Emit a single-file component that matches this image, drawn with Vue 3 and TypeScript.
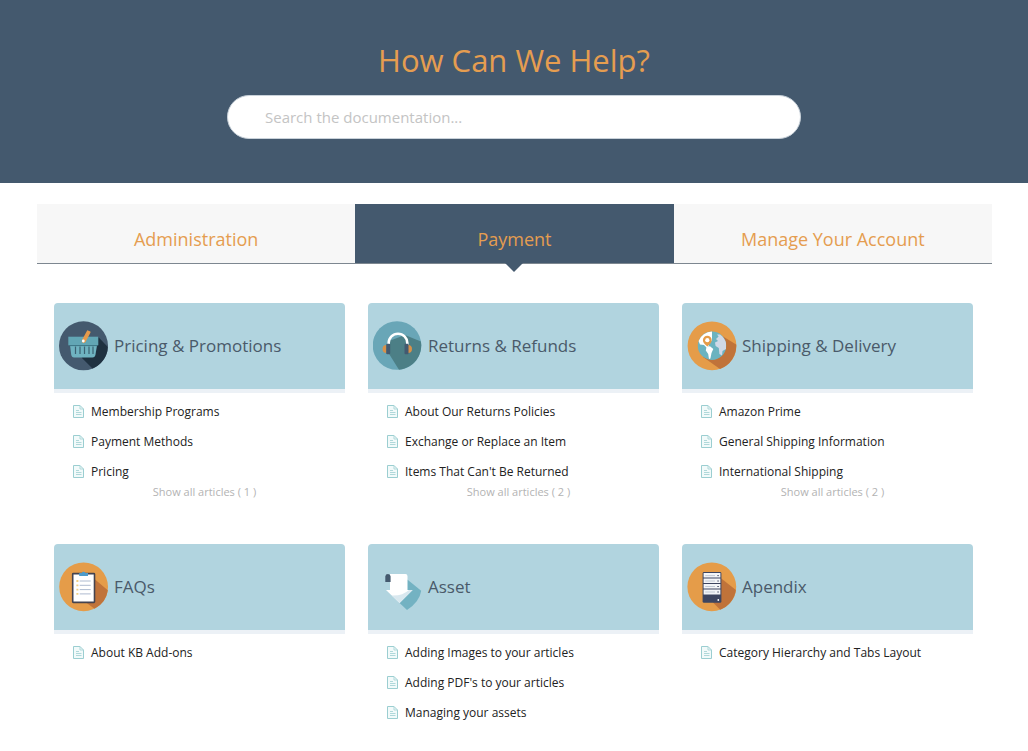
<script setup lang="ts">
import { computed, ref } from 'vue'

interface Category {
  icon: string
  title: string
  articles: string[]
  more?: number
}

const tabs: string[] = ['Administration', 'Payment', 'Manage Your Account']
const active = ref<string>('Payment')
const query = ref<string>('')

const categories: Category[] = [
  { icon: 'basket', title: 'Pricing & Promotions', articles: ['Membership Programs', 'Payment Methods', 'Pricing'], more: 1 },
  { icon: 'headphones', title: 'Returns & Refunds', articles: ['About Our Returns Policies', 'Exchange or Replace an Item', "Items That Can't Be Returned"], more: 2 },
  { icon: 'globe', title: 'Shipping & Delivery', articles: ['Amazon Prime', 'General Shipping Information', 'International Shipping'], more: 2 },
  { icon: 'clipboard', title: 'FAQs', articles: ['About KB Add-ons'] },
  { icon: 'arrow', title: 'Asset', articles: ['Adding Images to your articles', "Adding PDF's to your articles", 'Managing your assets'] },
  { icon: 'server', title: 'Apendix', articles: ['Category Hierarchy and Tabs Layout'] },
]

const visible = computed<Category[]>(() => {
  const q = query.value.trim().toLowerCase()
  if (!q) return categories
  return categories.filter((c) => c.articles.some((a) => a.toLowerCase().includes(q)))
})
</script>

<template>
  <div class="page">
    <header class="hero">
      <h1 class="hero-title">How Can We Help?</h1>
      <form class="search" role="search" @submit.prevent>
        <input v-model="query" class="search-input" type="text" aria-label="Search the documentation" placeholder="Search the documentation..." />
      </form>
    </header>

    <main>
      <nav class="tabs" role="tablist">
        <button
          v-for="tab in tabs"
          :key="tab"
          type="button"
          role="tab"
          class="tab"
          :class="{ active: tab === active }"
          :aria-selected="tab === active"
          @click="active = tab"
        >
          {{ tab }}
        </button>
      </nav>

      <div class="grid">
        <section v-for="cat in visible" :key="cat.title" class="category">
          <div class="category-head">
            <svg class="category-icon" viewBox="0 0 50 50" aria-hidden="true">
              <g v-if="cat.icon === 'basket'">
                <circle cx="24.5" cy="24.8" r="24.5" fill="#44596e" />
                <path d="M39.3 16 L48.8 26 A24.5 24.5 0 0 1 33.5 47.6 L22.5 36.5 L37 30 Z" fill="#1f3140" />
                <path d="M11 24 H38 L36.5 33.5 Q36 36.5 33.5 36.5 H15 Q12.6 36.5 12.2 33.5 Z" fill="#6fb3c1" />
                <path d="M16.5 25.5 V33 M21 25.5 V33 M25.5 25.5 V33 M30 25.5 V33 M34 25.5 V33" stroke="#3b6273" stroke-width="1.2" />
                <path d="M9.3 15.7 H39.3 V24.3 H9.3 Z" fill="#62a6b5" />
                <path d="M10 24.6 H38.6" stroke="#3b7484" stroke-width="1" />
                <path d="M28.3 9.2 L31.3 10.6 Q31.8 11 31.4 11.7 L26.4 21.2 Q25 22.6 23.4 21.6 Q22.4 20.5 23 19 Z" fill="#e59a4a" />
                <circle cx="24.3" cy="20" r="1.4" fill="#fff" />
              </g>
              <g v-else-if="cat.icon === 'headphones'">
                <circle cx="24" cy="24.5" r="24.3" fill="#69a6b7" />
                <path d="M32 14 L47.9 20.5 A24.3 24.3 0 0 1 26 48.7 L15.5 32 L16 20 Z" fill="#4c7f86" />
                <path d="M15.7 24 V22 A9.3 9.3 0 0 1 34.3 22 V24" fill="none" stroke="#fff" stroke-width="2.6" />
                <path d="M13.5 24 A4 4 0 0 0 13.5 32 Z M35 24 A4 4 0 0 1 35 32 Z" fill="#d8914a" />
                <rect x="13.2" y="22.7" width="4" height="10.6" rx="1" fill="#435a70" />
                <rect x="31.5" y="22.7" width="4" height="10.6" rx="1" fill="#435a70" />
              </g>
              <g v-else-if="cat.icon === 'globe'">
                <circle cx="25" cy="24.8" r="24.4" fill="#e59c49" />
                <path d="M36 15.5 L49.2 23.5 A24.4 24.4 0 0 1 33 47.9 L16 36 Z" fill="#c0733a" />
                <circle cx="25" cy="24.8" r="14.2" fill="#6bb3c0" />
                <path d="M25 10.6 A14.2 14.2 0 0 0 11.6 20 L13 23.5 L17 24 L19.5 26.5 L22 25.3 L21.5 22.5 L25 19.5 Z" fill="#fff" />
                <path d="M19.5 26 L23 25.2 L26.3 28 L24.5 32 L23.4 37.6 L22 38 L21.2 33 L18.8 29.5 Z" fill="#fff" />
                <path d="M29 18 L31.6 15.4 L30 13.6 L33 13.4 A14.2 14.2 0 0 1 39 22 V28 L35.5 30 L35 34.5 L32.4 33 L31.8 27 L28.6 25 L28 21.5 L31 20 Z" fill="#d0d9e7" />
                <path d="M20.3 14.8 A4.4 4.4 0 0 1 24.7 19.2 Q24.7 22 20.3 25.5 Q15.9 22 15.9 19.2 A4.4 4.4 0 0 1 20.3 14.8 Z" fill="#e59c49" />
                <circle cx="20.3" cy="19.2" r="2.1" fill="#fff" />
              </g>
              <g v-else-if="cat.icon === 'clipboard'">
                <circle cx="24.6" cy="24.8" r="24.4" fill="#e59c49" />
                <path d="M36 17.5 L48.8 28.2 A24.4 24.4 0 0 1 35.5 46.7 L27 40.5 Z" fill="#c0733a" />
                <rect x="13.7" y="11.6" width="21.8" height="28.8" rx=".6" fill="#fff" stroke="#44434f" stroke-width="1.6" />
                <path d="M20.2 11 H22.8 A1.9 1.9 0 0 1 26.4 11 H29 V14 H20.2 Z" fill="#4d9bca" />
                <path d="M20.7 19 H31.7 M20.7 23.3 H31.7 M20.7 27.6 H31.7 M20.7 31.9 H31.7" stroke="#aebbd0" stroke-width="1" />
                <path d="M17.4 19 H19.4 M17.4 23.3 H19.4 M17.4 27.6 H19.4 M17.4 31.9 H19.4" stroke="#f1cf85" stroke-width="1.8" />
              </g>
              <g v-else-if="cat.icon === 'arrow'">
                <path d="M34.3 17.5 L48.2 28.7 Q46.5 40 34 47.9 L26.6 40.9 L30 29 Z" fill="#73b2c2" />
                <path d="M17 12 H32.5 Q34.5 12 34.5 14.2 V28 H39.6 L26.6 40.9 L13 28 H17 Z" fill="#fff" />
                <path d="M18.8 33.5 Q29.5 34 36 28 H39.6 L26.6 40.9 Z" fill="#d9e8ef" />
                <path d="M12.3 20 V14.4 Q12.5 12 15 12 Q17.6 12.2 17.6 14.6 V20 Z" fill="#44596e" />
              </g>
              <g v-else>
                <circle cx="24.8" cy="24.8" r="24.4" fill="#e59c49" />
                <path d="M34.3 16.5 L48.9 28 A24.4 24.4 0 0 1 33.2 47.7 L26 40.5 Z" fill="#c0733a" />
                <rect x="15.6" y="10" width="18.8" height="30.8" rx="1.4" fill="#3d4560" />
                <path d="M16.6 11 H33.4 V15.6 H16.6 Z M16.6 16.6 H33.4 V21.1 H16.6 Z M16.6 22.1 H33.4 V26.6 H16.6 Z M16.6 27.6 H33.4 V32.6 H16.6 Z" fill="#f3f5f8" />
                <path d="M18.2 13.6 H28 M18.2 19 H28 M18.2 24.5 H28 M18.2 30 H28" stroke="#b6bfcc" stroke-width=".8" />
                <path d="M30.2 13.6 H32 M30.2 19 H32 M30.2 24.5 H32 M30.2 30 H32" stroke="#3d4560" stroke-width=".8" />
                <circle cx="31.3" cy="38" r=".9" fill="#fff" />
              </g>
            </svg>
            <h2 class="category-title">{{ cat.title }}</h2>
          </div>
          <ul class="articles">
            <li v-for="article in cat.articles" :key="article">
              <a class="article" href="#">
                <svg class="doc" viewBox="0 0 11 13" aria-hidden="true">
                  <path d="M.5 .5 H7 L10.5 4 V12.5 H.5 Z" fill="#f2fafa" stroke="#9bced1" />
                  <path d="M7 .5 V4 H10.5 M3 5.5 H6 M3 7.5 H8.5 M3 9.5 H8.5" fill="none" stroke="#b0d8da" />
                </svg>
                <span>{{ article }}</span>
              </a>
            </li>
          </ul>
          <a v-if="cat.more" class="more" href="#">Show all articles ( {{ cat.more }} )</a>
        </section>
      </div>
    </main>
  </div>
</template>

<style>
body {
  margin: 0;
  background: #fff;
}
</style>

<style scoped>
.page {
  font-family: 'Open Sans', 'Noto Sans', sans-serif;
  color: #222;
}
.hero {
  display: flex;
  flex-direction: column;
  align-items: center;
  gap: 13px;
  padding: 38px 24px 44px;
  background: #44596e;
}
.hero-title {
  margin: 0;
  font-size: 31px;
  line-height: 44px;
  font-weight: 400;
  color: #e59d50;
}
.search {
  width: 100%;
  max-width: 574px;
}
.search-input {
  display: block;
  box-sizing: border-box;
  width: 100%;
  height: 44px;
  padding: 0 37px;
  border: 1px solid #c9d2da;
  border-radius: 22px;
  background: #fff;
  font: inherit;
  font-size: 15px;
  color: #444;
}
.search-input::placeholder {
  color: #c4c4c4;
  opacity: 1;
}
.tabs {
  display: grid;
  grid-template-columns: repeat(3, 1fr);
  margin: 21px 36px 0 37px;
  border-bottom: 1px solid #7d8790;
}
.tab {
  position: relative;
  padding: 20px 8px 9px;
  border: 0;
  background: #f7f7f7;
  font: inherit;
  font-size: 18px;
  line-height: 30px;
  color: #e59d50;
  cursor: pointer;
}
.tab.active {
  background: #44596e;
}
.tab.active::after {
  content: '';
  position: absolute;
  top: 100%;
  left: 50%;
  margin-left: -9px;
  border: 9px solid transparent;
  border-top-color: #44596e;
  border-bottom: 0;
}
.grid {
  display: grid;
  grid-template-columns: repeat(3, 1fr);
  gap: 45px 23px;
  padding: 39px 55px 24px 54px;
}
.category {
  display: flex;
  flex-direction: column;
}
.category-head {
  display: flex;
  align-items: center;
  gap: 5px;
  height: 86px;
  padding-left: 5px;
  border-bottom: 4px solid #ecf1f6;
  border-radius: 4px 4px 0 0;
  background: #b1d4df;
  background-clip: padding-box;
}
.category-icon {
  flex: none;
  width: 50px;
  height: 50px;
}
.category-title {
  margin: 0;
  font-size: 17px;
  line-height: 24px;
  font-weight: 400;
  color: #4a5a6a;
}
.articles {
  margin: 0;
  padding: 3px 0 0 19px;
  list-style: none;
}
.article {
  display: flex;
  align-items: center;
  gap: 7px;
  height: 30px;
  font-size: 12px;
  color: #222;
  text-decoration: none;
}
.doc {
  flex: none;
  width: 11px;
  height: 13px;
}
.more {
  align-self: center;
  margin-top: -2px;
  padding-left: 10px;
  font-size: 11px;
  line-height: 15px;
  color: #b3b3b3;
  text-decoration: none;
}
</style>
